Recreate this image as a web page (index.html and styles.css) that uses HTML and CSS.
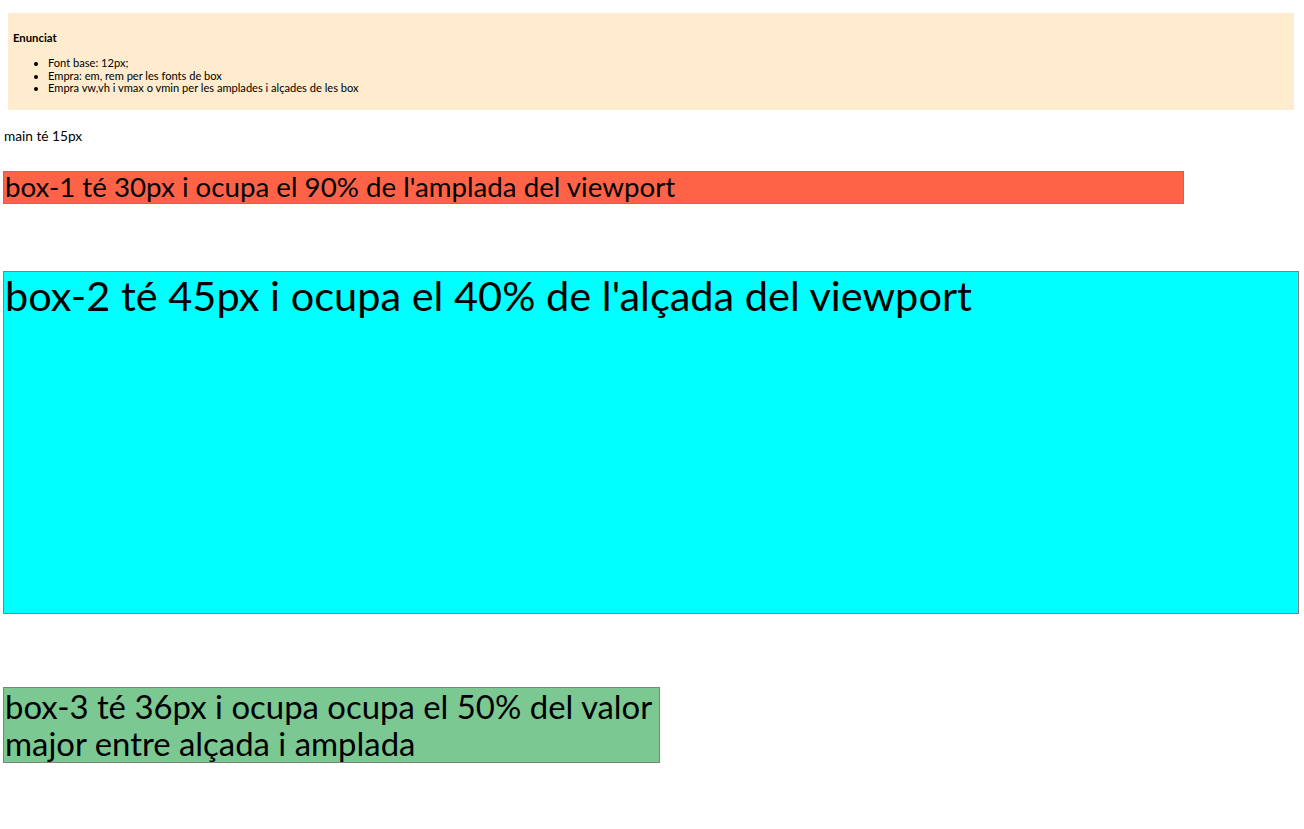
FILE: index.html
```html
<!DOCTYPE html>
<html lang="ca">
<head>
<meta charset="utf-8">
<title>Unitats</title>
<link rel="stylesheet" href="styles.css">
</head>
<body>
<section class="enunciat">
  <h4 class="enunciat-title">Enunciat</h4>
  <ul class="enunciat-list">
    <li>Font base: 12px;</li>
    <li>Empra: em, rem per les fonts de box</li>
    <li>Empra vw,vh i vmax o vmin per les amplades i alçades de les box</li>
  </ul>
</section>
<main class="main">
  <p class="main-text">main té 15px</p>
  <div class="box box-1">box-1 té 30px i ocupa el 90% de l'amplada del viewport</div>
  <div class="box box-2">box-2 té 45px i ocupa el 40% de l'alçada del viewport</div>
  <div class="box box-3">box-3 té 36px i ocupa ocupa el 50% del valor major entre alçada i amplada</div>
</main>
</body>
</html>
```
FILE: styles.css
```css
html, body {
  margin: 0;
  padding: 0;
  background: #ffffff;
}

body {
  font-family: Lato, "Open Sans", sans-serif;
  color: #000;
}

.enunciat {
  background: #ffebcd;
  margin: 13px 10px 0 8px;
  padding: 18px 0 15px 0;
}

.enunciat-title {
  margin: 0;
  padding-left: 5px;
  font-size: 11.3px;
  line-height: 13px;
  font-weight: bold;
}

.enunciat-list {
  margin: 13px 0 0 0;
  padding-left: 40px;
  font-size: 11.1px;
  line-height: 12.5px;
}

.main {
  padding: 0 0 0 3px;
}

.main-text {
  margin: 18px 0 0 1px;
  font-size: 13.7px;
  line-height: 15px;
}

.box {
  box-sizing: border-box;
  border: 1px solid #808080;
  padding: 0 0 0 1px;
}

.box-1 {
  margin-top: 28px;
  width: 1181px;
  height: 33px;
  background: #ff6347;
  font-size: 27.7px;
  line-height: 30px;
}

.box-2 {
  margin-top: 67px;
  width: 1296px;
  height: 343px;
  background: #00ffff;
  font-size: 41.5px;
  line-height: 46px;
}

.box-3 {
  margin-top: 73px;
  width: 657px;
  height: 76px;
  background: #7bc892;
  font-size: 32.9px;
  line-height: 37px;
}
```
